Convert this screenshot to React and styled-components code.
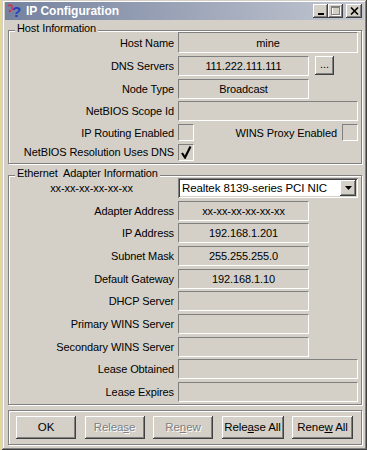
import React from 'react';
import styled, { createGlobalStyle, css } from 'styled-components';

const GlobalStyle = createGlobalStyle`
  html, body {
    margin: 0;
    padding: 0;
    background: #e3d896;
  }
  * { box-sizing: border-box; }
`;

const face = '#d4d0c8';

// 3D helpers, Win2000 style
const raised = css`
  background: ${face};
  box-shadow: inset -1px -1px 0 #404040, inset 1px 1px 0 #ffffff,
    inset -2px -2px 0 #808080, inset 2px 2px 0 ${face};
`;

const thinSunken = css`
  border-top: 1px solid #808080;
  border-left: 1px solid #808080;
  border-bottom: 1px solid #ffffff;
  border-right: 1px solid #ffffff;
`;

// 창 전체
const Window = styled.div`
  width: 365px;
  height: 450px;
  margin-left: 2px;
  padding: 2px 3px 3px 3px;
  background: ${face};
  box-shadow: inset -1px -1px 0 #404040, inset 1px 1px 0 ${face},
    inset -2px -2px 0 #808080, inset 2px 2px 0 #ffffff;
  font-family: 'Liberation Sans', Arial, sans-serif;
  font-size: 11px;
  letter-spacing: -0.1px;
  color: #000;
  display: flex;
  flex-direction: column;
`;

const TitleBar = styled.div`
  height: 18px;
  display: flex;
  align-items: center;
  padding: 0 2px 0 2px;
  background: linear-gradient(to right, #75829f, #c3c7d1);
`;

const TitleText = styled.span`
  flex: 1;
  margin-left: 3px;
  color: #ffffff;
  font-weight: bold;
  font-size: 12px;
  letter-spacing: 0;
`;

const CaptionButton = styled.div`
  ${raised};
  width: ${(p) => p.$w || 15}px;
  height: 14px;
  margin-left: ${(p) => p.$gap || 0}px;
  display: flex;
  align-items: center;
  justify-content: center;
`;

const Body = styled.div`
  padding: 10px 2px 0 3px;
  display: flex;
  flex-direction: column;
`;

// 그룹박스 (etched)
const Group = styled.div`
  position: relative;
  margin-top: ${(p) => p.$mt || 0}px;
  border: 1px solid #808080;
  box-shadow: inset 1px 1px 0 #ffffff, 1px 1px 0 #ffffff;
  padding: ${(p) => p.$pt || 1}px 3px 2px 0;
`;

const Legend = styled.span`
  position: absolute;
  top: -10px;
  left: 6px;
  padding: 0 2px;
  line-height: 14px;
  background: ${face};
  white-space: pre;
`;

const Grid = styled.div`
  display: grid;
  grid-template-columns: 165px 180px;
  column-gap: 4px;
  row-gap: ${(p) => p.$gap}px;
  grid-template-rows: ${(p) => p.$rows || 'none'};
  grid-auto-rows: 20px;
  align-items: center;
`;

const Label = styled.div`
  text-align: ${(p) => (p.$center ? 'center' : 'right')};
  white-space: nowrap;
`;

const Cell = styled.div`
  display: flex;
  align-items: center;
  height: 100%;
`;

const Field = styled.div`
  ${thinSunken};
  width: ${(p) => (p.$short ? 131 : 180)}px;
  height: 100%;
  display: flex;
  align-items: center;
  justify-content: center;
  background: ${face};
  white-space: nowrap;
`;

const SmallButton = styled.div`
  ${raised};
  width: 19px;
  height: 19px;
  margin-left: 6px;
  display: flex;
  align-items: center;
  justify-content: center;
  padding-bottom: 4px;
`;

const Check = styled.div`
  ${thinSunken};
  width: 16px;
  height: 17px;
  background: ${face};
  display: flex;
  align-items: center;
  justify-content: center;
`;

const InlineLabel = styled.span`
  margin-left: auto;
  margin-right: 5px;
  white-space: nowrap;
`;

const Combo = styled.div`
  width: 180px;
  height: 20px;
  background: #ffffff;
  box-shadow: inset 1px 1px 0 #808080, inset -1px -1px 0 #ffffff,
    inset 2px 2px 0 #404040, inset -2px -2px 0 ${face};
  display: flex;
  align-items: center;
  padding: 2px 2px 2px 4px;
  font-size: 11.5px;
`;

const ComboText = styled.span`
  flex: 1;
  white-space: nowrap;
`;

const ComboArrow = styled.div`
  ${raised};
  width: 16px;
  height: 16px;
  display: flex;
  align-items: center;
  justify-content: center;
`;

const ButtonPanel = styled.div`
  margin-top: 5px;
  height: 35px;
  border: 1px solid #808080;
  box-shadow: inset 1px 1px 0 #ffffff, 1px 1px 0 #ffffff;
  padding: 5px 8px 0 7px;
  display: flex;
  justify-content: space-between;
  align-items: flex-start;
`;

const Button = styled.div`
  ${raised};
  width: ${(p) => p.$w}px;
  height: 23px;
  display: flex;
  align-items: center;
  justify-content: center;
  font-size: 11.5px;
  white-space: pre;
  color: ${(p) => (p.$disabled ? '#808080' : '#000')};
  text-shadow: ${(p) => (p.$disabled ? '1px 1px 0 #ffffff' : 'none')};
`;

const AppIcon = () => (
  <svg width="16" height="16" viewBox="0 0 16 16">
    <path d="M1 3 q2 -2 4 0 q-1 2 1 4" fill="none" stroke="#d0304a" strokeWidth="1.6" />
    <circle cx="3" cy="8" r="1.2" fill="#d0304a" />
    <text x="5" y="14" fontFamily="Liberation Sans, Arial, sans-serif" fontWeight="bold" fontSize="15" fill="#2040c0">?</text>
  </svg>
);

const MinIcon = () => (
  <svg width="8" height="8" viewBox="0 0 8 8">
    <rect x="1" y="6" width="6" height="2" fill="#000" />
  </svg>
);

const MaxIcon = () => (
  <svg width="10" height="10" viewBox="0 0 10 10">
    <rect x="1.5" y="1.5" width="8" height="8" fill="none" stroke="#ffffff" />
    <rect x="0.5" y="0.5" width="8" height="8" fill="none" stroke="#808080" />
    <rect x="0.5" y="0.5" width="8" height="1.5" fill="#808080" />
  </svg>
);

const CloseIcon = () => (
  <svg width="9" height="8" viewBox="0 0 9 8">
    <path d="M1 0.5 L8 7.5 M8 0.5 L1 7.5" stroke="#000" strokeWidth="1.6" />
  </svg>
);

const CheckMark = () => (
  <svg width="12" height="14" viewBox="0 0 12 14">
    <path d="M2 8 L5 12.5 L10.5 1.5" fill="none" stroke="#000" strokeWidth="2.2" />
  </svg>
);

const DownArrow = () => (
  <svg width="7" height="4" viewBox="0 0 7 4">
    <path d="M0 0 H7 L3.5 4 Z" fill="#000" />
  </svg>
);

const ethernetRows = [
  ['Adapter Address', 'xx-xx-xx-xx-xx-xx', true],
  ['IP Address', '192.168.1.201', true],
  ['Subnet Mask', '255.255.255.0', true],
  ['Default Gateway', '192.168.1.10', true],
  ['DHCP Server', '', true],
  ['Primary WINS Server', '', true],
  ['Secondary WINS Server', '', true],
  ['Lease Obtained', '', false],
  ['Lease Expires', '', false],
];

export default function App() {
  return (
    <>
      <GlobalStyle />
      <Window>
        <TitleBar>
          <AppIcon />
          <TitleText>IP Configuration</TitleText>
          <CaptionButton><MinIcon /></CaptionButton>
          <CaptionButton><MaxIcon /></CaptionButton>
          <CaptionButton $w={16} $gap={3}><CloseIcon /></CaptionButton>
        </TitleBar>

        <Body>
          <Group>
            <Legend>Host Information</Legend>
            <Grid $gap={2.8} $rows="21px 20px 20px 20px 17px 17px">
              <Label>Host Name</Label>
              <Cell><Field>mine</Field></Cell>

              <Label>DNS Servers</Label>
              <Cell>
                <Field $short>111.222.111.111</Field>
                <SmallButton>...</SmallButton>
              </Cell>

              <Label>Node Type</Label>
              <Cell><Field $short>Broadcast</Field></Cell>

              <Label>NetBIOS Scope Id</Label>
              <Cell><Field /></Cell>

              <Label>IP Routing Enabled</Label>
              <Cell>
                <Check />
                <InlineLabel>WINS Proxy Enabled</InlineLabel>
                <Check />
              </Cell>

              <Label>NetBIOS Resolution Uses DNS</Label>
              <Cell>
                <Check><CheckMark /></Check>
              </Cell>
            </Grid>
          </Group>

          <Group $mt={11} $pt={2}>
            <Legend>{'Ethernet  Adapter Information'}</Legend>
            <Grid $gap={2.67}>
              <Label $center>xx-xx-xx-xx-xx-xx</Label>
              <Combo>
                <ComboText>Realtek 8139-series PCI NIC</ComboText>
                <ComboArrow><DownArrow /></ComboArrow>
              </Combo>
              {ethernetRows.map(([label, value, short]) => (
                <React.Fragment key={label}>
                  <Label>{label}</Label>
                  <Cell><Field $short={short}>{value}</Field></Cell>
                </React.Fragment>
              ))}
            </Grid>
          </Group>

          <ButtonPanel>
            <Button $w={60}><span>OK</span></Button>
            <Button $w={60} $disabled><span>Relea<u>s</u>e</span></Button>
            <Button $w={60} $disabled><span>Re<u>n</u>ew</span></Button>
            <Button $w={62}><span>Rele<u>a</u>se All</span></Button>
            <Button $w={61}><span>Rene<u>w</u> All</span></Button>
          </ButtonPanel>
        </Body>
      </Window>
    </>
  );
}
